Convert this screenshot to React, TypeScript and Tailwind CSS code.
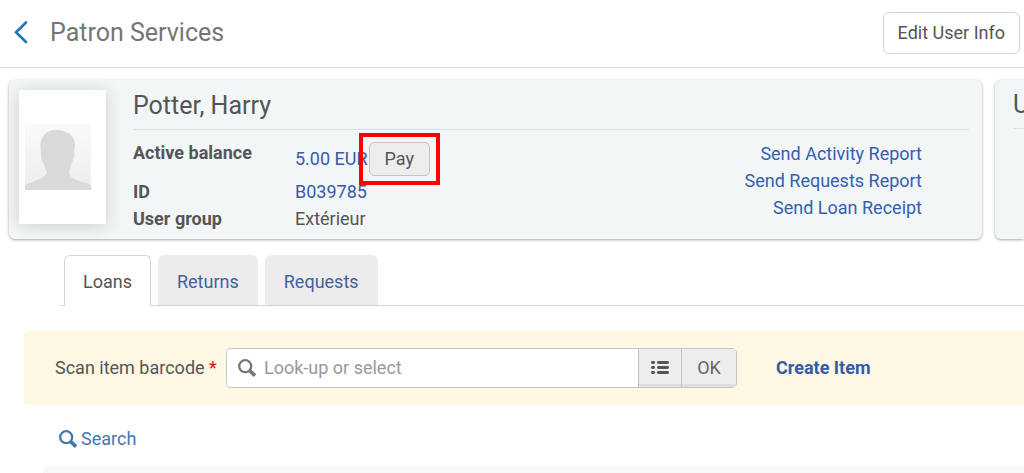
import { useState } from "react";

const tabs = ["Loans", "Returns", "Requests"];

const reports = [
  "Send Activity Report",
  "Send Requests Report",
  "Send Loan Receipt",
];

const SearchIcon = () => (
  <svg width="18" height="18" viewBox="0 0 18 18" fill="none" aria-hidden="true">
    <circle cx="7.2" cy="7.2" r="6" stroke="currentColor" strokeWidth="2.3" />
    <path d="M11.6 11.6 17 16.6" stroke="currentColor" strokeWidth="3.6" />
  </svg>
);

const ListIcon = () => (
  <svg width="18" height="15" viewBox="0 0 18 15" fill="currentColor" aria-hidden="true">
    <rect x="0" y="0" width="4" height="3" rx="1.4" />
    <rect x="6" y="0" width="12" height="3" rx="1.4" />
    <rect x="0" y="5" width="4" height="3" rx="1.4" />
    <rect x="6" y="5" width="12" height="3" rx="1.4" />
    <rect x="0" y="10" width="4" height="3" rx="1.4" />
    <rect x="6" y="10" width="12" height="3" rx="1.4" />
  </svg>
);

const Avatar = () => (
  <svg width="66" height="66" viewBox="0 0 66 66" role="img" aria-label="No photo">
    <defs>
      <linearGradient id="avatarBg" x1="0" y1="0" x2="0" y2="1">
        <stop offset="0" stopColor="#fafafa" />
        <stop offset="1" stopColor="#ededed" />
      </linearGradient>
    </defs>
    <rect width="66" height="66" fill="url(#avatarBg)" />
    <path
      d="M0 66V62Q1 60 5 59L15 55Q21 52 22 49Q21 45 19 40Q16 38 16 30Q15 27 16 26Q14 17 19 11Q25 5 34 6Q38 6 40 8Q46 9 49 16Q51 21 49 28Q50 30 48 36Q47 39 46 41L44 48Q44 52 49 55L57 58Q65 59 66 62V66Z"
      fill="#d9d9d9"
    />
  </svg>
);

const Header = () => (
  <header className="flex items-center justify-between border-b border-[#dedede] pt-3 pr-1 pb-[13px] pl-3">
    <div className="flex items-center gap-5">
      <a href="#back" aria-label="Back" className="text-[#1f77b4]">
        <svg width="18" height="24" viewBox="0 0 18 24" fill="none">
          <path
            d="M14 1.5 4 11.3 14 21"
            stroke="currentColor"
            strokeWidth="2.6"
            strokeLinecap="round"
          />
        </svg>
      </a>
      <h1 className="text-[25px] leading-8 text-[#757575]">Patron Services</h1>
    </div>
    <button
      type="button"
      className="rounded-md border border-[#d2d2d2] bg-white px-[14px] py-2"
    >
      Edit User Info
    </button>
  </header>
);

const PatronCard = () => (
  <section className="flex min-w-0 flex-1 gap-[27px] rounded-md bg-[#f2f6f7] pt-[10px] pr-[13px] pb-[7px] pl-[10px] shadow-[0_1px_3px_rgba(0,0,0,0.35)]">
    <div className="flex h-[134px] w-[87px] shrink-0 items-center bg-white pl-[6px] shadow-[0_2px_16px_rgba(0,0,0,0.16)]">
      <Avatar />
    </div>
    <div className="min-w-0 flex-1">
      <h2 className="border-b border-[#dde1e2] pb-2 text-[25px] leading-[31px]">
        Potter, Harry
      </h2>
      <div className="flex justify-between pt-[9px] pr-[47px]">
        <dl className="grid grid-cols-[162px_auto] leading-[27px]">
          <dt className="font-bold">Active balance</dt>
          <dd className="flex h-[39px] items-center gap-px whitespace-nowrap">
            <a href="#balance" className="text-[#3b5ba5]">
              5.00 EUR
            </a>
            <span className="relative">
              <button
                type="button"
                className="block rounded-[5px] border border-[#c3c3c3] bg-[#ededed] px-[15px] py-[2px] leading-7"
              >
                Pay
              </button>
              {/* highlight around the pay action */}
              <span className="pointer-events-none absolute -inset-x-[10px] -inset-y-[9px] border-4 border-[#f00]" />
            </span>
          </dd>
          <dt className="font-bold">ID</dt>
          <dd>
            <a href="#id" className="text-[#3b5ba5]">
              B039785
            </a>
          </dd>
          <dt className="font-bold">User group</dt>
          <dd>Extérieur</dd>
        </dl>
        <ul className="pt-px text-right leading-[27px]">
          {reports.map((report) => (
            <li key={report}>
              <a href="#report" className="text-[#355fb0]">
                {report}
              </a>
            </li>
          ))}
        </ul>
      </div>
    </div>
  </section>
);

const App = () => {
  const [activeTab, setActiveTab] = useState("Loans");
  const [barcode, setBarcode] = useState("");

  return (
    <div className="overflow-hidden bg-white font-['Roboto',sans-serif] text-[18px] leading-6 text-[#555]">
      <Header />
      <main>
        <div className="flex gap-[13px] pt-3 pl-[9px]">
          <PatronCard />
          <section className="w-[29px] shrink-0 overflow-hidden rounded-l-md bg-[#f2f6f7] pt-[9px] pl-[18px] shadow-[0_1px_3px_rgba(0,0,0,0.35)]">
            <h2 className="border-b border-[#dde1e2] pb-2 text-[25px] leading-[31px]">
              U
            </h2>
          </section>
        </div>

        <div className="ml-[60px] flex gap-[7px] border-b border-[#d5d5d5] pt-4 pl-1" role="tablist">
          {tabs.map((tab) => (
            <button
              key={tab}
              type="button"
              role="tab"
              aria-selected={activeTab === tab}
              onClick={() => setActiveTab(tab)}
              className={
                activeTab === tab
                  ? "-mb-px rounded-t-md border border-b-0 border-[#d5d5d5] bg-white px-[18px] pt-[14px] pb-3"
                  : "rounded-t-md bg-[#ececec] px-[19px] pt-[15px] pb-[11px] text-[#45609f]"
              }
            >
              {tab}
            </button>
          ))}
        </div>

        <form
          onSubmit={(e) => e.preventDefault()}
          className="mt-[25px] ml-6 flex items-center rounded-l-[5px] bg-[#fdf7e3] py-[17px] pl-[31px]"
        >
          <label htmlFor="barcode" className="w-[171px] shrink-0">
            Scan item barcode <span className="text-[#e01020]">*</span>
          </label>
          <div className="flex h-10 w-full max-w-[511px] overflow-hidden rounded-[5px] border border-[#c4c4c4] bg-white">
            <div className="flex min-w-0 flex-1 items-center gap-2 pl-[11px] text-[#777]">
              <SearchIcon />
              <input
                id="barcode"
                type="text"
                value={barcode}
                onChange={(e) => setBarcode(e.target.value)}
                placeholder="Look-up or select"
                className="min-w-0 flex-1 bg-transparent outline-none placeholder:text-[#999]"
              />
            </div>
            <button
              type="button"
              aria-label="Open list"
              className="flex w-[43px] items-center justify-center border-l border-[#c4c4c4] bg-[#ededed] shadow-[inset_0_-3px_0_#dfdfe1]"
            >
              <ListIcon />
            </button>
            <button
              type="submit"
              className="w-[55px] border-l border-[#c4c4c4] bg-[#ededed] text-[#666] shadow-[inset_0_-3px_0_#dfdfe1]"
            >
              OK
            </button>
          </div>
          <a href="#create" className="ml-[39px] shrink-0 font-bold text-[#355da3]">
            Create Item
          </a>
        </form>

        <div className="px-[59px] pt-[22px] pb-[15px]">
          <a href="#search" className="inline-flex items-center gap-1 align-top text-[#4278b0]">
            <SearchIcon />
            Search
          </a>
        </div>
        <div className="ml-[43px] h-[7px] bg-[#f8f8f8]" />
      </main>
    </div>
  );
};

export default App;
